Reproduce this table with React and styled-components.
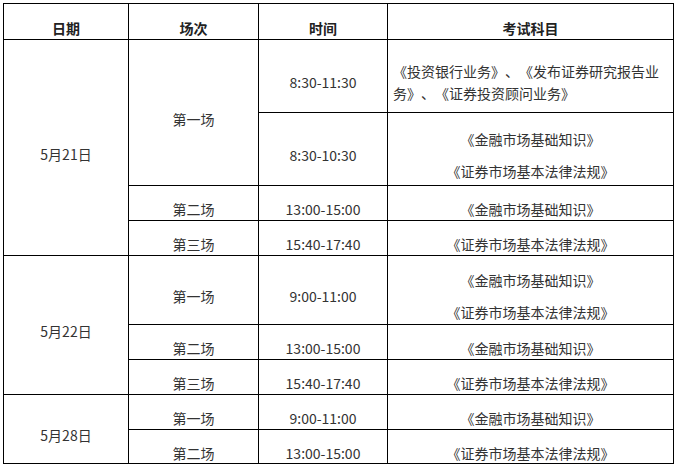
import React from "react";
import styled, { createGlobalStyle } from "styled-components";

const GlobalStyle = createGlobalStyle`
  html, body {
    margin: 0;
    padding: 0;
    background: #fff;
  }
  body {
    font-family: "Noto Sans CJK SC", "Noto Sans", sans-serif;
    text-spacing-trim: space-all;
  }
`;

const Page = styled.div`
  padding: 3px;
`;

const Table = styled.table`
  width: 670px;
  border-collapse: collapse;
  table-layout: fixed;
  font-size: 14px;
  color: #333;
  text-spacing-trim: space-all;
`;

const Row = styled.tr`
  height: ${(p) => p.h}px;
`;

const HeadCell = styled.th`
  border: 1px solid #000;
  padding: 12px 4px 0;
  line-height: 20px;
  font-weight: bold;
  color: #222;
  text-align: center;
  vertical-align: middle;
`;

const Cell = styled.td`
  border: 1px solid #000;
  padding: 12px ${(p) => (p.left ? "6px" : "4px")} 0
    ${(p) => (p.left ? "5px" : "4px")};
  line-height: ${(p) => (p.left ? "22px" : "20px")};
  text-align: ${(p) => (p.left ? "left" : "center")};
  vertical-align: middle;
`;

const Line = styled.p`
  margin: 0;
  line-height: 24px;
  & + & {
    margin-top: 8px;
  }
`;

const JR = "《金融市场基础知识》";
const FL = "《证券市场基本法律法规》";

const Both = () => (
  <>
    <Line>{JR}</Line>
    <Line>{FL}</Line>
  </>
);

export default function App() {
  return (
    <Page>
      <GlobalStyle />
      <Table>
        <colgroup>
          <col style={{ width: 125 }} />
          <col style={{ width: 130 }} />
          <col style={{ width: 129 }} />
          <col style={{ width: 286 }} />
        </colgroup>
        <thead>
          <Row h={36}>
            <HeadCell>日期</HeadCell>
            <HeadCell>场次</HeadCell>
            <HeadCell>时间</HeadCell>
            <HeadCell>考试科目</HeadCell>
          </Row>
        </thead>
        <tbody>
          <Row h={73}>
            <Cell rowSpan={4}>5月21日</Cell>
            <Cell rowSpan={2}>第一场</Cell>
            <Cell>8:30-11:30</Cell>
            <Cell left>
              《投资银行业务》、《发布证券研究报告业务》、《证券投资顾问业务》
            </Cell>
          </Row>
          <Row h={73}>
            <Cell>8:30-10:30</Cell>
            <Cell>
              <Both />
            </Cell>
          </Row>
          <Row h={35}>
            <Cell>第二场</Cell>
            <Cell>13:00-15:00</Cell>
            <Cell>{JR}</Cell>
          </Row>
          <Row h={35}>
            <Cell>第三场</Cell>
            <Cell>15:40-17:40</Cell>
            <Cell>{FL}</Cell>
          </Row>

          <Row h={69}>
            <Cell rowSpan={3}>5月22日</Cell>
            <Cell>第一场</Cell>
            <Cell>9:00-11:00</Cell>
            <Cell>
              <Both />
            </Cell>
          </Row>
          <Row h={35}>
            <Cell>第二场</Cell>
            <Cell>13:00-15:00</Cell>
            <Cell>{JR}</Cell>
          </Row>
          <Row h={35}>
            <Cell>第三场</Cell>
            <Cell>15:40-17:40</Cell>
            <Cell>{FL}</Cell>
          </Row>

          <Row h={35}>
            <Cell rowSpan={2}>5月28日</Cell>
            <Cell>第一场</Cell>
            <Cell>9:00-11:00</Cell>
            <Cell>{JR}</Cell>
          </Row>
          <Row h={34}>
            <Cell>第二场</Cell>
            <Cell>13:00-15:00</Cell>
            <Cell>{FL}</Cell>
          </Row>
        </tbody>
      </Table>
    </Page>
  );
}
